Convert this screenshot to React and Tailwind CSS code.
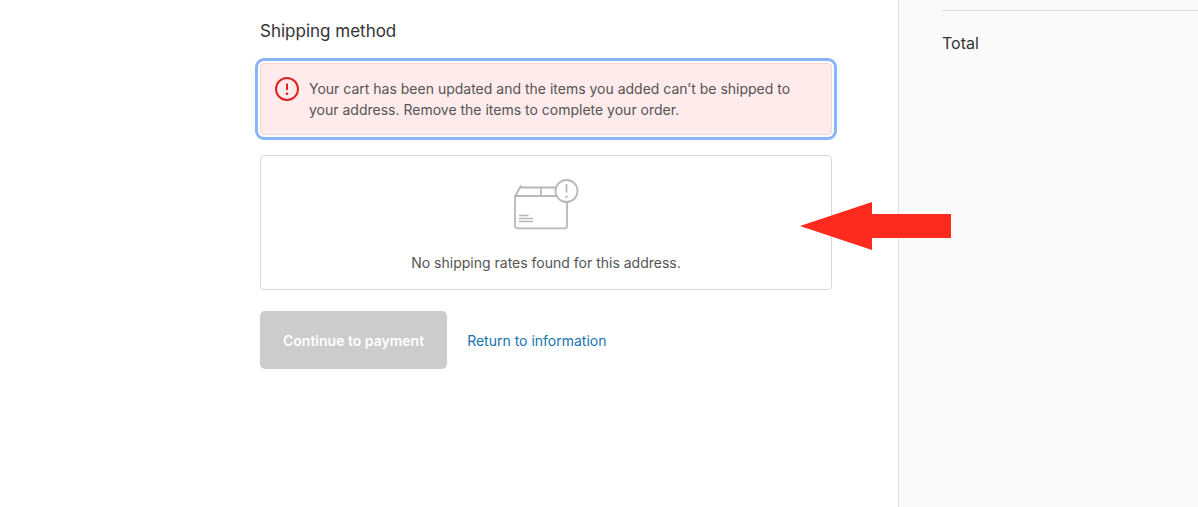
function AlertIcon() {
  return (
    <svg className="size-6 shrink-0" viewBox="0 0 24 24" fill="none" aria-hidden="true">
      <circle cx="12" cy="12" r="11" stroke="#e32020" strokeWidth="2" />
      <path d="M12 6.5v6.5" stroke="#e32020" strokeWidth="2" />
      <circle cx="12" cy="16.8" r="1.3" fill="#e32020" />
    </svg>
  );
}

function PackageIcon() {
  return (
    <svg
      className="h-[52px] w-[66px]"
      viewBox="0 0 66 52"
      fill="none"
      stroke="#b8b8b8"
      strokeWidth="1.8"
      aria-hidden="true"
    >
      <path d="M43 18H2v30a2.3 2.3 0 0 0 2.3 2.3h47.4A2.3 2.3 0 0 0 54 48V24" />
      <path d="M2 18.5L8 7.5M7 9.5h36M28 9.5v8.5" />
      <circle cx="53.5" cy="13" r="11" />
      <path d="M53.5 6v8.5" />
      <circle cx="53.5" cy="18.7" r="1.2" fill="#b8b8b8" stroke="none" />
      <path d="M6 37.5h9.5M6 40.5h14M6 43.5h14" strokeWidth="1.5" />
    </svg>
  );
}

function Arrow() {
  return (
    <svg
      className="absolute top-[46px] -right-[120px] z-10 h-12 w-[151px]"
      viewBox="0 0 151 48"
      aria-hidden="true"
    >
      <path d="M0 24L72 0v12h79v24H72v12z" fill="#fd2a1e" />
    </svg>
  );
}

export default function App() {
  return (
    <div className="flex min-h-screen bg-white font-['Inter','Liberation_Sans',sans-serif] text-sm text-[#545454]">
      <main className="flex flex-1 justify-end pt-5 pr-[66px] pl-6">
        <div className="w-full max-w-[572px]">
          <h2 className="text-[17px] leading-[22px] text-[#333333]">Shipping method</h2>

          <div
            role="alert"
            tabIndex={-1}
            className="mt-[21px] flex gap-2.5 rounded border border-[#fad3d3] bg-[#ffebeb] px-3.5 pt-[13px] pb-3.5 outline-3 outline-offset-2 outline-[#8ab4f8]"
          >
            <AlertIcon />
            <p className="max-w-[490px] pt-px leading-[21px]">
              Your cart has been updated and the items you added can’t be shipped to your address.
              Remove the items to complete your order.
            </p>
          </div>

          <section className="relative mt-5 flex flex-col items-center gap-[22px] rounded border border-[#d9d9d9] pt-[22px] pb-4">
            <PackageIcon />
            <p className="leading-[21px]">No shipping rates found for this address.</p>
            <Arrow />
          </section>

          <div className="mt-[21px] flex items-center gap-5 leading-[21px]">
            <button
              type="button"
              disabled
              className="h-[58px] rounded-[5px] bg-[#cccccc] px-[23px] font-semibold text-white"
            >
              Continue to payment
            </button>
            <a href="#information" className="text-[#1773b0]">
              Return to information
            </a>
          </div>
        </div>
      </main>

      <aside className="w-[300px] border-l border-[#e1e1e1] bg-[#fafafa] pt-2.5 pl-[43px]">
        <div className="border-t border-[#dedede] pt-5">
          <span className="text-base text-[#333333]">Total</span>
        </div>
      </aside>
    </div>
  );
}
